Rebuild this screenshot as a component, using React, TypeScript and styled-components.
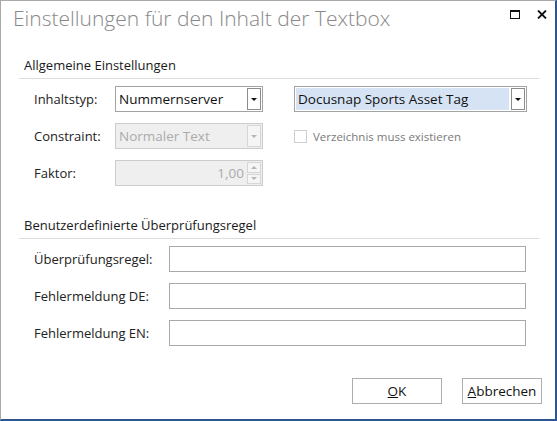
import styled, { createGlobalStyle } from 'styled-components';

const GlobalStyle = createGlobalStyle`
  html, body {
    margin: 0;
    padding: 0;
    background: #ffffff;
  }
  body {
    font-family: "Open Sans", "Noto Sans", sans-serif;
  }
`;

const Window = styled.div`
  width: 557px;
  height: 421px;
  box-sizing: border-box;
  background: #ffffff;
  border-left: 1px solid #a9a9a9;
  border-top: 1px solid #a9a9a9;
  border-right: 2px solid #2d5690;
  border-bottom: 2px solid #2d5690;
  display: flex;
  flex-direction: column;
`;

const TitleBar = styled.div`
  height: 55px;
  display: flex;
  align-items: flex-start;
  justify-content: space-between;
  box-sizing: border-box;
  padding: 3px 8px 0 12px;
`;

const Title = styled.div`
  font-size: 21px;
  line-height: 29px;
  font-weight: 300;
  color: #888888;
`;

const WindowButtons = styled.div`
  display: flex;
  gap: 17px;
  padding-top: 6px;
`;

const Section = styled.div<{ $top?: number }>`
  margin: ${(p) => p.$top ?? 0}px 16px 0 18px;
`;

const SectionHeader = styled.div`
  font-size: 13px;
  line-height: 18px;
  color: #1a1a1a;
  padding: 0 0 4px 5px;
  border-bottom: 1px solid #dcdcdc;
`;

const TopGrid = styled.div`
  display: grid;
  grid-template-columns: 81px 179px 233px;
  row-gap: 11px;
  padding: 7px 0 0 15px;
  align-items: center;
`;

const BottomGrid = styled.div`
  display: grid;
  grid-template-columns: 135px 357px;
  row-gap: 11px;
  padding: 7px 0 0 15px;
  align-items: center;
`;

const Label = styled.div`
  font-size: 13px;
  color: #222222;
  white-space: nowrap;
`;

const Combo = styled.div<{ $disabled?: boolean; $width?: number }>`
  width: ${(p) => (p.$width ? `${p.$width}px` : 'auto')};
  height: 26px;
  box-sizing: border-box;
  border: 1px solid ${(p) => (p.$disabled ? '#cccccc' : '#a3a3a3')};
  background: ${(p) => (p.$disabled ? '#efefef' : '#ffffff')};
  padding: 1px;
  display: flex;
  gap: 2px;
`;

const ComboText = styled.div<{ $disabled?: boolean; $highlight?: boolean }>`
  flex: 1;
  display: flex;
  align-items: center;
  padding-left: 2px;
  font-size: 13.5px;
  color: ${(p) => (p.$disabled ? '#ababab' : '#111111')};
  background: ${(p) => (p.$highlight ? '#d5e3f5' : 'transparent')};
  white-space: nowrap;
  overflow: hidden;
`;

const DropButton = styled.div<{ $disabled?: boolean }>`
  width: 14px;
  box-sizing: border-box;
  border: 1px solid ${(p) => (p.$disabled ? '#d6d6d6' : '#8c8c8c')};
  background: ${(p) => (p.$disabled ? '#f5f5f5' : '#ffffff')};
  display: flex;
  align-items: center;
  justify-content: center;
`;

const Arrow = styled.div<{ $disabled?: boolean; $up?: boolean }>`
  width: 0;
  height: 0;
  border-left: 3px solid transparent;
  border-right: 3px solid transparent;
  ${(p) =>
    p.$up
      ? `border-bottom: 3px solid ${p.$disabled ? '#b5b5b5' : '#111'};`
      : `border-top: 3px solid ${p.$disabled ? '#b5b5b5' : '#111'};`}
`;

const Spinner = styled.div`
  width: 14px;
  display: flex;
  flex-direction: column;
  gap: 1px;
`;

const SpinButton = styled.div`
  flex: 1;
  box-sizing: border-box;
  border: 1px solid #d6d6d6;
  background: #f5f5f5;
  display: flex;
  align-items: center;
  justify-content: center;
`;

const NumberText = styled(ComboText)`
  justify-content: flex-end;
  padding-right: 1px;
`;

const CheckRow = styled.label`
  display: flex;
  align-items: center;
  gap: 6px;
  font-size: 11.5px;
  color: #7a7a7a;
`;

const CheckBox = styled.span`
  width: 13px;
  height: 13px;
  box-sizing: border-box;
  border: 1px solid #cfcfcf;
  background: #ffffff;
`;

const TextInput = styled.div`
  height: 26px;
  box-sizing: border-box;
  border: 1px solid #a9a9a9;
  background: #ffffff;
`;

const Footer = styled.div`
  margin-top: auto;
  display: flex;
  justify-content: flex-end;
  gap: 20px;
  padding: 0 13px 15px 0;
`;

const Button = styled.button<{ $width: number }>`
  width: ${(p) => p.$width}px;
  height: 26px;
  border: 1px solid #adadad;
  background: #ffffff;
  font-family: "Open Sans", "Noto Sans", sans-serif;
  font-size: 13.5px;
  color: #111111;
  padding: 0;
  cursor: pointer;
`;

const Spacer = styled.div`
  height: 26px;
`;

const MaximizeIcon = () => (
  <svg width="10" height="9" viewBox="0 0 10 9">
    <rect x="0.5" y="0.5" width="9" height="8" fill="none" stroke="#111" strokeWidth="1" />
    <rect x="0" y="0" width="10" height="2" fill="#111" />
  </svg>
);

const CloseIcon = () => (
  <svg width="10" height="9" viewBox="0 0 10 9">
    <path d="M1 0.5 L9 8.5 M9 0.5 L1 8.5" stroke="#111" strokeWidth="1.8" />
  </svg>
);

const App = () => {
  return (
    <>
      <GlobalStyle />
      <Window>
        <TitleBar>
          <Title>Einstellungen für den Inhalt der Textbox</Title>
          <WindowButtons>
            <MaximizeIcon />
            <CloseIcon />
          </WindowButtons>
        </TitleBar>

        <Section>
          <SectionHeader>Allgemeine Einstellungen</SectionHeader>
          <TopGrid>
            <Label>Inhaltstyp:</Label>
            <Combo $width={148}>
              <ComboText>Nummernserver</ComboText>
              <DropButton>
                <Arrow />
              </DropButton>
            </Combo>
            <Combo>
              <ComboText $highlight>Docusnap Sports Asset Tag</ComboText>
              <DropButton>
                <Arrow />
              </DropButton>
            </Combo>

            <Label>Constraint:</Label>
            <Combo $disabled $width={148}>
              <ComboText $disabled>Normaler Text</ComboText>
              <DropButton $disabled>
                <Arrow $disabled />
              </DropButton>
            </Combo>
            <CheckRow>
              <CheckBox />
              Verzeichnis muss existieren
            </CheckRow>

            <Label>Faktor:</Label>
            <Combo $disabled $width={148}>
              <NumberText $disabled>1,00</NumberText>
              <Spinner>
                <SpinButton>
                  <Arrow $disabled $up />
                </SpinButton>
                <SpinButton>
                  <Arrow $disabled />
                </SpinButton>
              </Spinner>
            </Combo>
            <Spacer />
          </TopGrid>
        </Section>

        <Section $top={30}>
          <SectionHeader>Benutzerdefinierte Überprüfungsregel</SectionHeader>
          <BottomGrid>
            <Label>Überprüfungsregel:</Label>
            <TextInput />
            <Label>Fehlermeldung DE:</Label>
            <TextInput />
            <Label>Fehlermeldung EN:</Label>
            <TextInput />
          </BottomGrid>
        </Section>

        <Footer>
          <Button $width={90}>
            <u>O</u>K
          </Button>
          <Button $width={80}>
            <u>A</u>bbrechen
          </Button>
        </Footer>
      </Window>
    </>
  );
};

export default App;
